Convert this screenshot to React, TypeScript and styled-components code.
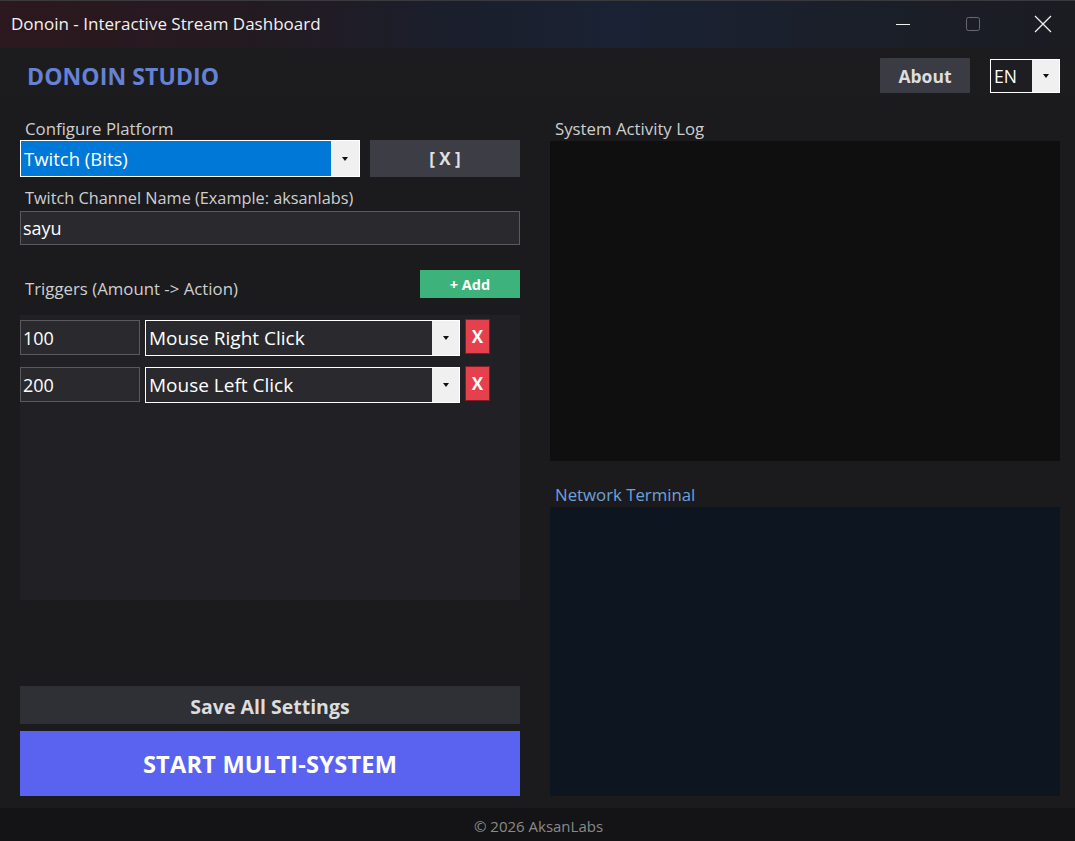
import React from "react";
import styled, { createGlobalStyle } from "styled-components";

const Global = createGlobalStyle`
  html, body { margin: 0; padding: 0; background: #141416; }
  body { font-family: "Open Sans", "Noto Sans", sans-serif; }
  #root { width: 1075px; height: 841px; overflow: hidden; }
  * { box-sizing: border-box; }
`;

const Window = styled.div`
  width: 1075px;
  height: 841px;
  display: flex;
  flex-direction: column;
  background: #1b1b1e;
  color: #d0d0d0;
`;

const TitleBar = styled.div`
  height: 48px;
  flex: none;
  display: flex;
  align-items: center;
  padding-left: 11px;
  border-top: 1px solid #3a3a3e;
  background: linear-gradient(90deg, #2c181e 0%, #241a20 22%, #1b1e2b 40%, #1a2233 58%, #1a1f2a 78%, #1b1c22 100%);
`;

const TitleText = styled.div`
  flex: 1;
  font-size: 17px;
  color: #f2f2f2;
  margin-top: -2px;
`;

const WinControls = styled.div`
  display: flex;
  align-items: center;
  height: 100%;
  margin-right: -3px;
`;

const WinButton = styled.div`
  width: 70px;
  height: 100%;
  display: flex;
  align-items: center;
  justify-content: center;
  margin-top: -1px;
`;

const Header = styled.div`
  height: 48px;
  flex: none;
  display: flex;
  align-items: center;
  padding: 7px 15px 0 27px;
  background: #1c1c1f;
`;

const Brand = styled.div`
  flex: 1;
  font-weight: 700;
  font-size: 23px;
  color: #6682d4;
  letter-spacing: 0.1px;
`;

const AboutButton = styled.div`
  width: 90px;
  height: 35px;
  display: flex;
  align-items: center;
  justify-content: center;
  background: #3b3b43;
  color: #dedede;
  font-weight: 700;
  font-size: 17.5px;
  margin-right: 20px;
  border-radius: 1px;
`;

const SelectBox = styled.div<{ $fill: string; $w: number; $h: number }>`
  width: ${(p) => p.$w}px;
  height: ${(p) => p.$h}px;
  display: flex;
  border: 1px solid #ffffff;
  background: ${(p) => p.$fill};
`;

const SelectValue = styled.div<{ $size: number }>`
  flex: 1;
  display: flex;
  align-items: center;
  padding-left: 3px;
  font-size: ${(p) => p.$size}px;
  color: #ffffff;
  white-space: nowrap;
  overflow: hidden;
`;

const SelectArrow = styled.div<{ $w: number }>`
  width: ${(p) => p.$w}px;
  flex: none;
  background: #f0f0f0;
  display: flex;
  align-items: center;
  justify-content: center;
  &::after {
    content: "";
    border-left: 3.5px solid transparent;
    border-right: 3.5px solid transparent;
    border-top: 4px solid #111;
  }
`;

const Body = styled.div`
  flex: 1;
  display: flex;
  gap: 30px;
  padding: 22px 15px 12px 20px;
  min-height: 0;
`;

const LeftCol = styled.div`
  width: 500px;
  flex: none;
  display: flex;
  flex-direction: column;
`;

const RightCol = styled.div`
  flex: 1;
  display: flex;
  flex-direction: column;
`;

const Label = styled.div<{ $color?: string }>`
  height: 22px;
  line-height: 22px;
  padding-left: 5px;
  font-size: 16.8px;
  color: ${(p) => p.$color || "#cfcfcf"};
  white-space: nowrap;
`;

const PlatformRow = styled.div`
  display: flex;
  align-items: flex-start;
  gap: 10px;
`;

const GreyButton = styled.div<{ $w: number; $h: number; $bg: string; $size: number }>`
  width: ${(p) => p.$w}px;
  height: ${(p) => p.$h}px;
  flex: none;
  display: flex;
  align-items: center;
  justify-content: center;
  background: ${(p) => p.$bg};
  color: #e2e2e2;
  font-weight: 700;
  font-size: ${(p) => p.$size}px;
`;

const TextInput = styled.div<{ $w?: number; $h: number }>`
  ${(p) => (p.$w ? `width: ${p.$w}px;` : "")}
  height: ${(p) => p.$h}px;
  flex: none;
  display: flex;
  align-items: center;
  padding-left: 2px;
  background: #2a2a2e;
  border: 1px solid #5a5a5e;
  font-size: 18px;
  color: #ffffff;
`;

const ChannelLabel = styled(Label)`
  margin-top: 10px;
  margin-bottom: 2px;
  font-size: 16.3px;
`;

const TriggerHeader = styled.div`
  display: flex;
  align-items: flex-end;
  justify-content: space-between;
  margin-top: 25px;
`;

const AddButton = styled.div`
  width: 100px;
  height: 28px;
  display: flex;
  align-items: center;
  justify-content: center;
  background: #3db37b;
  color: #ffffff;
  font-weight: 700;
  font-size: 14.5px;
  margin-bottom: 2px;
`;

const TriggerList = styled.div`
  height: 285px;
  margin-top: 15px;
  background: #212125;
  display: flex;
  flex-direction: column;
  gap: 11px;
  padding-top: 5px;
`;

const TriggerRow = styled.div`
  display: flex;
  align-items: flex-start;
`;

const ActionSelect = styled(SelectBox)`
  margin-left: 5px;
`;

const RemoveButton = styled.div`
  width: 25px;
  height: 35px;
  margin-left: 5px;
  margin-top: -1px;
  display: flex;
  align-items: center;
  justify-content: center;
  background: #e5404b;
  color: #ffffff;
  font-weight: 700;
  font-size: 17px;
  border: 1px solid #7a1f25;
`;

const Spacer = styled.div`
  flex: 1;
`;

const SaveButton = styled.div`
  height: 38px;
  display: flex;
  align-items: center;
  justify-content: center;
  padding-top: 2px;
  background: #2f2f36;
  color: #dcdcdc;
  font-weight: 700;
  font-size: 19.5px;
`;

const StartButton = styled.div`
  height: 65px;
  margin-top: 7px;
  display: flex;
  align-items: center;
  justify-content: center;
  background: #5963f0;
  color: #ffffff;
  font-weight: 700;
  font-size: 23.6px;
  letter-spacing: 0.2px;
`;

const LogBox = styled.div<{ $bg: string; $h?: number }>`
  ${(p) => (p.$h ? `height: ${p.$h}px; flex: none;` : "flex: 1;")}
  background: ${(p) => p.$bg};
`;

const LogLabel = styled(Label)`
  margin-bottom: 1px;
`;

const RightGap = styled.div`
  height: 23px;
  flex: none;
`;

const Footer = styled.div`
  height: 33px;
  flex: none;
  background: #141416;
  display: flex;
  align-items: center;
  justify-content: center;
  font-size: 15px;
  color: #8a8a8a;
  padding-left: 2px;
  padding-top: 2px;
`;

const triggers = [
  { amount: "100", action: "Mouse Right Click" },
  { amount: "200", action: "Mouse Left Click" },
];

export default function App() {
  return (
    <>
      <Global />
      <Window>
        <TitleBar>
          <TitleText>Donoin - Interactive Stream Dashboard</TitleText>
          <WinControls>
            <WinButton>
              <svg width="16" height="16" viewBox="0 0 16 16">
                <line x1="1" y1="8.5" x2="15" y2="8.5" stroke="#f0f0f0" strokeWidth="1" />
              </svg>
            </WinButton>
            <WinButton>
              <svg width="16" height="16" viewBox="0 0 16 16">
                <rect x="1.5" y="1.5" width="13" height="13" rx="2" fill="none" stroke="#6a6a6e" strokeWidth="1" />
              </svg>
            </WinButton>
            <WinButton>
              <svg width="18" height="18" viewBox="0 0 18 18">
                <path d="M1 1 L17 17 M17 1 L1 17" stroke="#f2f2f2" strokeWidth="1.2" />
              </svg>
            </WinButton>
          </WinControls>
        </TitleBar>

        <Header>
          <Brand>DONOIN STUDIO</Brand>
          <AboutButton>About</AboutButton>
          <SelectBox $fill="#1e1e22" $w={70} $h={34}>
            <SelectValue $size={17.5}>EN</SelectValue>
            <SelectArrow $w={27} />
          </SelectBox>
        </Header>

        <Body>
          <LeftCol>
            <Label>Configure Platform</Label>
            <PlatformRow>
              <SelectBox $fill="#0078d7" $w={340} $h={37}>
                <SelectValue $size={18.5}>Twitch (Bits)</SelectValue>
                <SelectArrow $w={28} />
              </SelectBox>
              <GreyButton $w={150} $h={37} $bg="#3d3d45" $size={17}>[ X ]</GreyButton>
            </PlatformRow>
            <ChannelLabel>Twitch Channel Name (Example: aksanlabs)</ChannelLabel>
            <TextInput $h={34}>sayu</TextInput>

            <TriggerHeader>
              <Label>Triggers (Amount -&gt; Action)</Label>
              <AddButton>+ Add</AddButton>
            </TriggerHeader>
            <TriggerList>
              {triggers.map((t) => (
                <TriggerRow key={t.amount}>
                  <TextInput $w={120} $h={35}>{t.amount}</TextInput>
                  <ActionSelect $fill="#2a2a2e" $w={315} $h={36}>
                    <SelectValue $size={19}>{t.action}</SelectValue>
                    <SelectArrow $w={27} />
                  </ActionSelect>
                  <RemoveButton>X</RemoveButton>
                </TriggerRow>
              ))}
            </TriggerList>
            <Spacer />
            <SaveButton>Save All Settings</SaveButton>
            <StartButton>START MULTI-SYSTEM</StartButton>
          </LeftCol>

          <RightCol>
            <LogLabel>System Activity Log</LogLabel>
            <LogBox $bg="#0f0f10" $h={320} />
            <RightGap />
            <LogLabel $color="#6ea2dc">Network Terminal</LogLabel>
            <LogBox $bg="#0c1520" />
          </RightCol>
        </Body>

        <Footer>© 2026 AksanLabs</Footer>
      </Window>
    </>
  );
}
